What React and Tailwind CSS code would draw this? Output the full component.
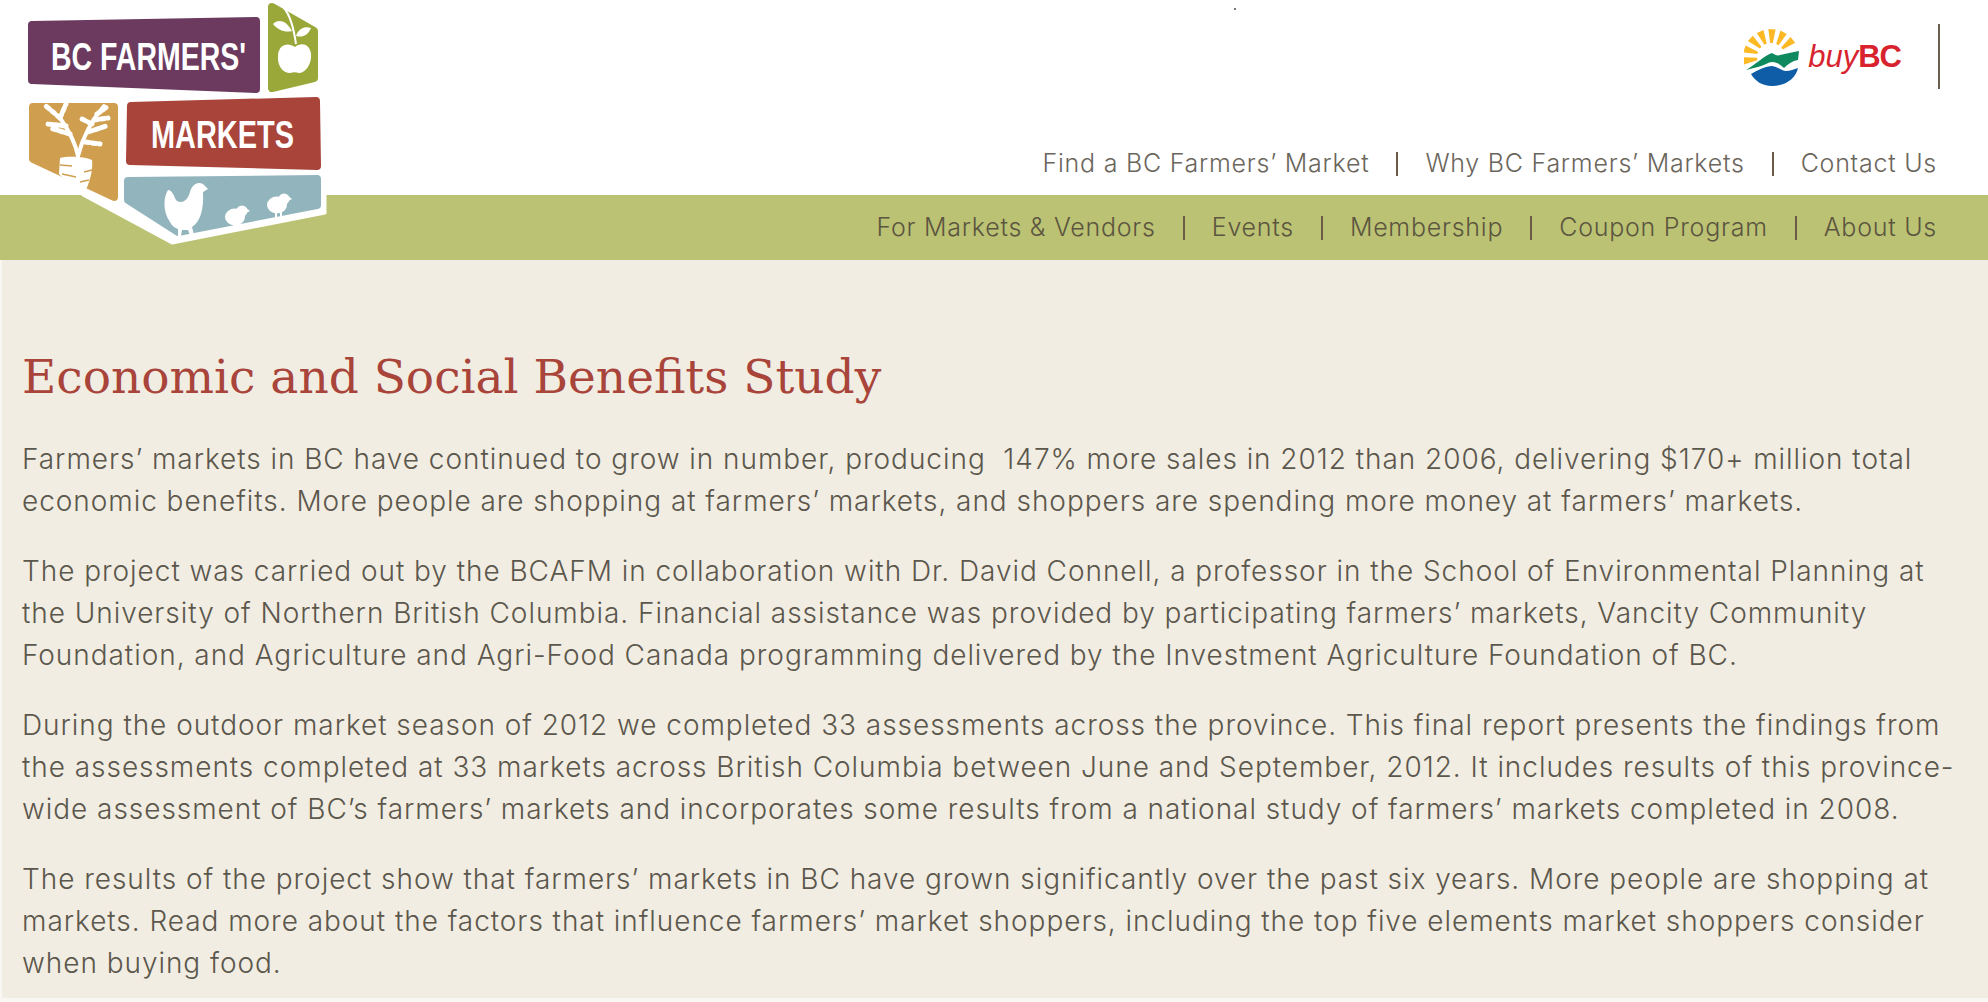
const topLinks = ['Find a BC Farmers’ Market', 'Why BC Farmers’ Markets', 'Contact Us']
const mainLinks = ['For Markets & Vendors', 'Events', 'Membership', 'Coupon Program', 'About Us']

function NavRow({ links }) {
	return (
		<ul className="flex items-center justify-end">
			{links.map((link, i) => (
				<li key={link} className="flex items-center">
					{i > 0 && <span className="mx-[27px] h-[24px] w-[2px] bg-[#6b5a45]"></span>}
					<a className="whitespace-nowrap">{link}</a>
				</li>
			))}
		</ul>
	)
}

function Chick({ x, y }) {
	return (
		<g transform={`translate(${x} ${y})`} fill="#fff">
			<ellipse cx="10" cy="12" rx="10" ry="8.5" />
			<circle cx="17" cy="6" r="5.5" />
			<path d="M21 3 L25 6 L21 8 Z M8 19 L8 25 L10 25 L10 19 Z M13 19 L13 25 L15 25 L15 19 Z" />
		</g>
	)
}

function Logo() {
	return (
		<svg width="340" height="250" viewBox="0 0 340 250" className="absolute left-0 top-0">
			<path d="M83 195 L172 243 L325 213 L325 195 Z" fill="#fff" stroke="#fff" strokeWidth="3" strokeLinejoin="round" />
			<g strokeLinejoin="round" strokeWidth="8">
				<path d="M32 25 L256 21 L256 89 L32 80 Z" fill="#6b3a5e" stroke="#6b3a5e" />
				<path d="M272 7 L314 31 L314 78 L272 88 Z" fill="#99a838" stroke="#99a838" />
				<path d="M131 106 L316 101 L317 166 L130 161 Z" fill="#a8443a" stroke="#a8443a" />
				<path d="M33 107 L114 107 L114 197 L33 159 Z" fill="#cf9f4f" stroke="#cf9f4f" />
				<path d="M128 181 L317 179 L317 205 L178 232 L128 200 Z" fill="#92b5bd" stroke="#92b5bd" />
			</g>
			<text x="51" y="70" fontFamily="'Liberation Sans', sans-serif" fontWeight="700" fontSize="38" fill="#fff" textLength="195" lengthAdjust="spacingAndGlyphs">BC FARMERS'</text>
			<text x="151" y="148" fontFamily="'Liberation Sans', sans-serif" fontWeight="700" fontSize="38" fill="#fff" textLength="143" lengthAdjust="spacingAndGlyphs">MARKETS</text>
			{/* apple */}
			<path d="M295 47 C288 42 279 44 278 55 C277 66 283 73 290 73 C293 72 296 72 299 73 C306 73 312 63 311 54 C310 44 301 42 295 47 Z" fill="#fff" />
			<path d="M284 8 C290 15 294 30 296 44" fill="none" stroke="#fff" strokeWidth="2" />
			<path d="M292 31 C286 20 278 19 273 24 C278 30 285 33 292 31 Z M296 36 C299 28 305 26 311 28 C308 35 303 38 296 36 Z" fill="#fff" />
			{/* carrot */}
			<path d="M60 158 C66 156 84 156 92 160 C93 168 91 178 86 190 L80 188 C70 184 62 178 59 174 Z" fill="#fff" />
			<path d="M60 165 L72 166 M84 172 L92 170 M62 174 L76 177 M80 182 L89 180" stroke="#cf9f4f" strokeWidth="1.5" />
			<g fill="none" stroke="#fff" strokeLinecap="round">
				<path d="M78 156 C76 146 70 132 60 118" strokeWidth="4" />
				<path d="M78 156 C82 140 90 122 104 106" strokeWidth="4" />
			</g>
			<g fill="none" stroke="#fff" strokeLinecap="round" strokeWidth="5" strokeDasharray="4 3">
				<path d="M60 118 L46 106 M66 126 L47 124 M60 118 L66 104 M70 134 L50 128" />
				<path d="M92 124 L80 118 M97 114 L108 106 M94 120 L108 118 M88 132 L106 126 M85 142 L100 144" />
			</g>
			{/* hen */}
			<path d="M168 190 C163 198 163 212 170 222 C172 226 175 228 178 229 L178 236 L181 236 L182 230 L188 230 L190 235 L194 235 L192 227 C200 222 204 210 203 192 L208 189 L203 184 C197 181 192 185 190 192 C188 200 182 205 176 200 C174 196 172 190 168 190 Z" fill="#fff" />
			<Chick x={225} y={205} />
			<Chick x={267} y={193} />
		</svg>
	)
}

// sun rays fan out from the middle of the badge
const rayAngles = [188, 163, 138, 113, 88, 63, 38]

function rayPath(deg) {
	const a = (deg * Math.PI) / 180
	const d = 0.13
	const pt = (r, t) => `${(27 + r * Math.cos(t)).toFixed(1)} ${(29 - r * Math.sin(t)).toFixed(1)}`
	return `M${pt(14, a - d * 0.7)} L${pt(28, a - d)} L${pt(28, a + d)} L${pt(14, a + d * 0.7)} Z`
}

function BuyBC() {
	return (
		<div className="flex items-center">
			<svg width="56" height="58" viewBox="0 0 56 58">
				{rayAngles.map(deg => (
					<path key={deg} d={rayPath(deg)} fill="#fdb924" />
				))}
				<path d="M2 42 C12 36 20 28 28 25 C31 27 34 28 36 27 C42 26 48 24 55 23 L54 32 C48 33 44 36 40 40 C34 34 28 32 22 36 C16 39 8 40 2 42 Z" fill="#0f8a5f" />
				<path d="M7 46 C14 42 22 38 28 38 C34 39 38 43 42 43 C46 43 50 41 54 40 C52 50 42 58 28 58 C18 58 11 53 7 46 Z" fill="#0f5da6" />
			</svg>
			<span className="ml-[8px] text-[31px] leading-none text-[#d8232f] font-['Liberation_Sans',sans-serif]">
				<i className="font-normal">buy</i><b className="font-bold tracking-[-1px]">BC</b>
			</span>
		</div>
	)
}

export default function App() {
	return (
		<div className="relative min-h-[1002px] bg-[#f1ede3] font-['Inter',sans-serif] font-light text-[#5c574c]">
			<span className="absolute left-[1234px] top-[8px] h-[2px] w-[2px] bg-[#777]"></span>
			<header className="bg-white">
				<div className="flex h-[195px] flex-col items-end pr-[51px]">
					<div className="-mr-[3px] mt-[24px] flex h-[65px] items-center">
						<BuyBC />
						<span className="ml-[37px] h-[65px] w-[2px] bg-[#6b5d50]"></span>
					</div>
					<nav className="mt-[56px] text-[25px] tracking-[0.75px] text-[#6b665c]">
						<NavRow links={topLinks} />
					</nav>
				</div>
				<nav className="flex h-[65px] items-center justify-end bg-[#bbc273] pr-[51px] text-[25px] tracking-[0.75px] text-[#5c5540]">
					<NavRow links={mainLinks} />
				</nav>
			</header>
			<Logo />
			<main className="h-[742px] border-b-[4px] border-l-2 border-[#f9f7f2] pl-[20px] pt-[87px]">
				<h1 className="mb-[31px] whitespace-nowrap font-['DejaVu_Serif',serif] text-[47px] font-normal leading-[60px] text-[#a8443a]">Economic and Social Benefits Study</h1>
				<div className="whitespace-nowrap text-[28px] leading-[42.25px] tracking-[0.95px]">
					<p className="mb-[27.25px]">Farmers’ markets in BC have continued to grow in number, producing{'\u00a0'} 147% more sales in 2012 than 2006, delivering $170+ million total<br />economic benefits. More people are shopping at farmers’ markets, and shoppers are spending more money at farmers’ markets.</p>
					<p className="mb-[27.25px]">The project was carried out by the BCAFM in collaboration with Dr. David Connell, a professor in the School of Environmental Planning at<br />the University of Northern British Columbia. Financial assistance was provided by participating farmers’ markets, Vancity Community<br />Foundation, and Agriculture and Agri-Food Canada programming delivered by the Investment Agriculture Foundation of BC.</p>
					<p className="mb-[27.25px]">During the outdoor market season of 2012 we completed 33 assessments across the province. This final report presents the findings from<br />the assessments completed at 33 markets across British Columbia between June and September, 2012. It includes results of this province-<br />wide assessment of BC’s farmers’ markets and incorporates some results from a national study of farmers’ markets completed in 2008.</p>
					<p>The results of the project show that farmers’ markets in BC have grown significantly over the past six years. More people are shopping at<br />markets. Read more about the factors that influence farmers’ market shoppers, including the top five elements market shoppers consider<br />when buying food.</p>
				</div>
			</main>
		</div>
	)
}
